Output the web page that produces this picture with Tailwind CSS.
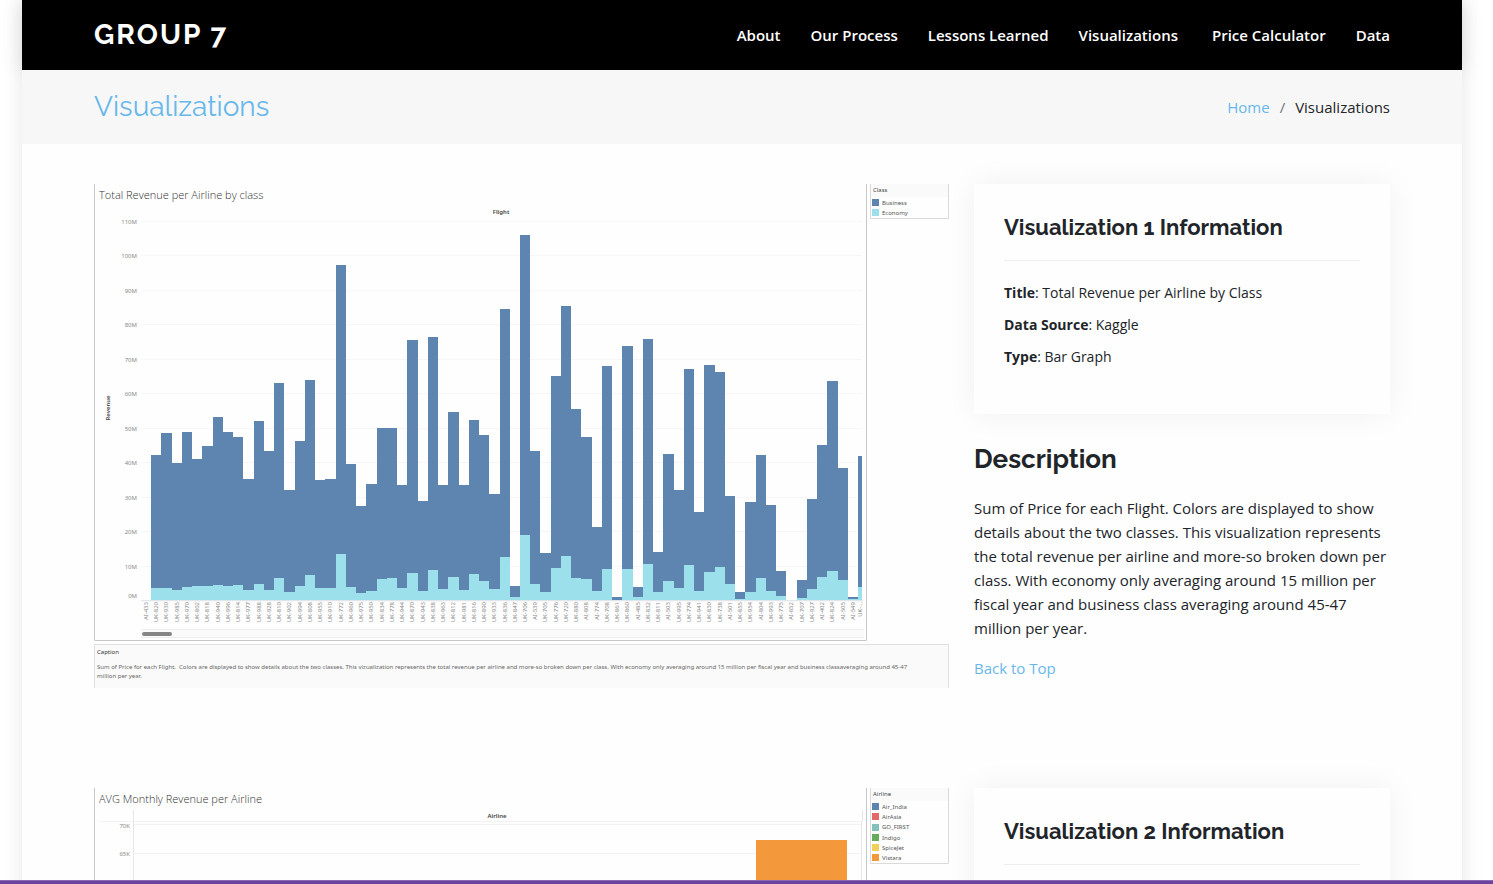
<!DOCTYPE html>
<html lang="en">
<head>
<meta charset="utf-8">
<meta name="viewport" content="width=device-width, initial-scale=1">
<title>Visualizations - Group 7</title>
<script src="https://cdn.jsdelivr.net/npm/@tailwindcss/browser@4"></script>
</head>
<body class="flex h-screen flex-col bg-white font-['Segoe_UI','Open_Sans',sans-serif] text-[15px] leading-6 text-[#212529]">
<div class="min-h-0 flex-1 overflow-hidden pr-[9px]">
  <div id="top" class="mx-auto min-h-full max-w-[1440px] bg-[#fefefe] shadow-[0_0_20px_rgba(0,0,0,0.1)]">
    <header class="flex h-[70px] items-center justify-between bg-black px-[72px] text-white shadow-[0_0_20px_rgba(0,0,0,0.1)]">
      <a href="#" class="font-['Raleway','Lato',sans-serif] text-[28px] leading-8 font-bold tracking-[2px]">GROUP 7</a>
      <nav class="flex gap-[30px] text-[15px] font-semibold">
        <a href="#">About</a>
        <a href="#">Our Process</a>
        <a href="#">Lessons Learned</a>
        <a href="#" class="pr-1">Visualizations</a>
        <a href="#">Price Calculator</a>
        <a href="#">Data</a>
      </nav>
    </header>
    <div class="flex h-[74px] items-center justify-between bg-[#f7f7f7] px-[72px]">
      <h1 class="font-['Raleway','Lato',sans-serif] text-[28px] leading-8 font-normal text-[#68b8eb]">Visualizations</h1>
      <ol class="flex gap-[10px]">
        <li><a href="#" class="text-[#68b8eb]">Home</a></li>
        <li class="text-[#6c757d]">/</li>
        <li>Visualizations</li>
      </ol>
    </div>
    <main class="flex flex-col gap-[100px] px-[72px] pt-10">
      <section class="grid grid-cols-[minmax(0,856fr)_minmax(0,416fr)] items-start gap-6">
        <svg id="revenue" viewBox="0 0 856 504" class="w-full font-['Noto_Sans','Open_Sans',sans-serif]" role="img" aria-label="Total Revenue per Airline by class">
          <path d="M.5 0V456.500H772.500V0" fill="none" stroke="#c8c8c8"/>
          <text x="5" y="15" class="fill-[#333] font-['Open_Sans',sans-serif] text-[11px] font-light">Total Revenue per Airline by class</text>
          <text x="407" y="30" text-anchor="middle" class="fill-[#444] text-[6px] font-semibold">Flight</text>
          <text transform="translate(16 224) rotate(-90)" text-anchor="middle" class="fill-[#444] text-[6px] font-semibold">Revenue</text>
          <g id="grid" class="fill-[#8a8a8a] text-[6px]" text-anchor="end"></g>
          <g id="bars" shape-rendering="crispEdges"></g>
          <path d="M47 416.500H769" stroke="#dfe6ec"/>
          <g id="flights" class="fill-[#8a8a8a] text-[6px]" text-anchor="end"></g>
          <path d="M47 445.500H770M47 453.500H770" stroke="#ededed"/>
          <rect x="47" y="446" width="723" height="7" fill="#fafafa"/>
          <rect x="48" y="448" width="30" height="4" rx="2" fill="#858585"/>
          <rect x="776" width="79" height="13" fill="#fafafa"/>
          <path d="M776.500 0V34.500H854.500V0" fill="none" stroke="#dadada"/>
          <text x="779" y="8" class="fill-[#444] text-[6px]">Class</text>
          <rect x="778" y="15" width="7" height="7" fill="#5e84b0"/>
          <rect x="778" y="25" width="7" height="7" fill="#9ce0eb"/>
          <g class="fill-[#555] text-[6px]"><text x="788" y="21">Business</text><text x="788" y="31">Economy</text></g>
          <rect y="460" width="855" height="44" fill="#fafafa"/>
          <path d="M.5 504V460.500H854.500V504" fill="none" stroke="#dfdfdf"/>
          <text x="3" y="470" class="fill-[#333] text-[6px]">Caption</text>
          <g class="fill-[#666] text-[6px]">
            <text x="3" y="485">Sum of Price for each Flight.&nbsp; Colors are displayed to show details about the two classes. This vizualization represents the total revenue per airline and more-so broken down per class. With economy only averaging around 15 million per fiscal year and business classaveraging around 45-47</text>
            <text x="3" y="494">million per year.</text>
          </g>
        </svg>
        <div>
          <div class="min-h-[230px] bg-[#fefefe] p-[30px] shadow-[0_0_30px_rgba(8,13,20,0.06)]">
            <h2 class="mb-5 border-b border-[#eee] pb-5 font-['Raleway','Lato',sans-serif] text-[22px] leading-[26px] font-bold">Visualization 1 Information</h2>
            <ul class="flex flex-col gap-2 text-sm leading-6">
              <li><strong>Title</strong>: Total Revenue per Airline by Class</li>
              <li><strong>Data Source</strong>: Kaggle</li>
              <li><strong>Type</strong>: Bar Graph</li>
            </ul>
          </div>
          <div class="pt-[29px]">
            <h2 class="mb-[21px] font-['Raleway','Lato',sans-serif] text-[26px] leading-8 font-bold">Description</h2>
            <p>Sum of Price for each Flight. Colors are displayed to show details about the two classes. This visualization represents the total revenue per airline and more-so broken down per class. With economy only averaging around 15 million per fiscal year and business class averaging around 45-47 million per year.</p>
            <p class="mt-4"><a href="#top" class="text-[#68b8eb]">Back to Top</a></p>
          </div>
        </div>
      </section>
      <section class="grid grid-cols-[minmax(0,856fr)_minmax(0,416fr)] items-start gap-6">
        <svg viewBox="0 0 856 504" class="w-full font-['Noto_Sans','Open_Sans',sans-serif]" role="img" aria-label="AVG Monthly Revenue per Airline">
          <path d="M.5 0V456.500H772.500V0" fill="none" stroke="#c8c8c8"/>
          <text x="5" y="15" class="fill-[#333] font-['Open_Sans',sans-serif] text-[11px] font-light">AVG Monthly Revenue per Airline</text>
          <text x="403" y="30" text-anchor="middle" class="fill-[#444] text-[6px] font-semibold">Airline</text>
          <path d="M5 33.500H768M39 36.500H768M39 65.500H768" stroke="#f3f3f3"/>
          <path d="M39.500 22V456M767.500 33V456M768.500 22V33" stroke="#e6e6e6"/>
          <g class="fill-[#8a8a8a] text-[6px]" text-anchor="end"><text x="36" y="40">70K</text><text x="36" y="68">65K</text></g>
          <rect x="662" y="52" width="91" height="404" fill="#f4993b"/>
          <rect x="776" width="79" height="13" fill="#fafafa"/>
          <path d="M776.500 0V75.500H854.500V0" fill="none" stroke="#dadada"/>
          <text x="779" y="8" class="fill-[#444] text-[6px]">Airline</text>
          <rect x="778" y="15" width="7" height="7" fill="#5e84b0"/>
          <rect x="778" y="25" width="7" height="7" fill="#e66767"/>
          <rect x="778" y="36" width="7" height="7" fill="#85c0ba"/>
          <rect x="778" y="46" width="7" height="7" fill="#66aa5c"/>
          <rect x="778" y="56" width="7" height="7" fill="#f0cf5a"/>
          <rect x="778" y="66" width="7" height="7" fill="#f4993b"/>
          <g class="fill-[#555] text-[6px]">
            <text x="788" y="21">Air_India</text><text x="788" y="31">AirAsia</text><text x="788" y="41">GO_FIRST</text><text x="788" y="52">Indigo</text><text x="788" y="62">SpiceJet</text><text x="788" y="72">Vistara</text>
          </g>
        </svg>
        <div class="min-h-[230px] bg-[#fefefe] p-[30px] shadow-[0_0_30px_rgba(8,13,20,0.06)]">
          <h2 class="mb-5 border-b border-[#eee] pb-5 font-['Raleway','Lato',sans-serif] text-[22px] leading-[26px] font-bold">Visualization 2 Information</h2>
        </div>
      </section>
    </main>
  </div>
</div>
<div class="z-10 h-1 shrink-0 border-t border-[#8a6bb3] bg-[#6b449f]"></div>
<script>
// Each row: flight, top of the stacked bar, top of the economy part (chart units)
const rows = `AI-433,416,416;UK-820,271,404;UK-930,249,404;UK-985,279,406;UK-970,248,403;UK-802,275,402;UK-818,262,402;UK-940,233,401;UK-996,248,402;UK-814,253,401;UK-977,295,406;UK-988,237,400;UK-928,267,406;UK-810,199,394;UK-902,306,408;UK-994,257,402;UK-808,196,391;UK-955,296,404;UK-910,295,404;UK-772,81,370;UK-960,280,403;UK-975,322,409;UK-950,300,407;UK-834,244,395;UK-778,244,394;UK-944,301,404;UK-870,156,389;UK-943,317,407;UK-838,153,386;UK-963,301,405;UK-812,228,393;UK-981,301,406;UK-816,236,390;UK-890,251,397;UK-933,310,405;UK-836,125,373;UK-847,402,413;UK-706,51,351;AI-539,267,400;UK-705,369,408;UK-776,192,384;UK-720,122,372;UK-880,225,394;AI-808,253,395;AI-774,343,407;UK-708,182,385;UK-861,413,416;UK-860,162,385;AI-485,403,413;UK-832,155,380;UK-811,368,408;AI-503,270,397;UK-995,306,404;UK-774,185,381;UK-941,328,407;UK-830,181,388;UK-738,188,383;AI-501,312,400;UK-855,408,415;UK-954,318,408;AI-804,271,394;UK-993,321,407;UK-775,387,412;AI-652,416,416;UK-707,396,414;UK-927,315,405;AI-402,261,393;UK-824,197,387;AI-505,284,396;AI-549,413,415;UK-...,272,403`.split(";").map(r => r.split(","));
const put = (id, html) => document.getElementById(id).innerHTML = html;
const left = i => Math.round(47 + i * 10.243);
let grid = "";
for (let m = 0; m <= 110; m += 10) {
  const y = Math.round(416.500 - m * 3.452);
  grid += `<path d="M47 ${y + 0.5}H768" stroke="#f7f7f7"/><text x="43" y="${m ? y + 3 : 414}">${m}M</text>`;
}
put("grid", grid);
put("bars", rows.map(([, b, e], i) => {
  const x = left(i), w = Math.min(left(i + 1), 768) - x;
  return `<rect x="${x}" y="${b}" width="${w}" height="${e - b}" fill="#5e84b0"/><rect x="${x}" y="${e}" width="${w}" height="${416 - e}" fill="#9ce0eb"/>`;
}).join(""));
put("flights", rows.map(([n], i) => `<text transform="translate(${i === 70 ? 768 : left(i) + 7} 418) rotate(-90)">${n}</text>`).join(""));
</script>
</body>
</html>
